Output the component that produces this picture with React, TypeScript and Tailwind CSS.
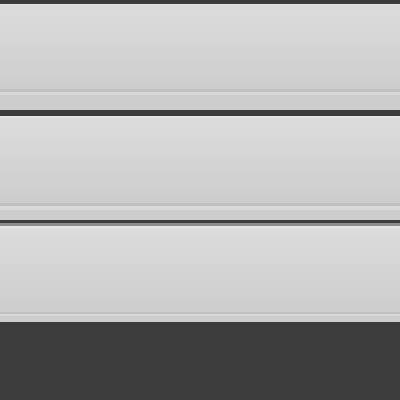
import React from 'react';

const rows = [
  { id: 'a', top: 'h-[1px]', body: 'h-[84px]', dark: 'h-[3px]', light: 'h-[3px]', bottom: 'h-[15px]', edge: false },
  { id: 'b', top: 'h-[2px]', body: 'h-[85px]', dark: 'h-[3px]', light: 'h-[4px]', bottom: 'h-[10px]', edge: false },
  { id: 'c', top: 'h-[2px]', body: 'h-[84px]', dark: 'h-[2px]', light: 'h-[2px]', bottom: 'h-[6px]', edge: true },
];

const Bar: React.FC<{ row: (typeof rows)[number] }> = ({ row }) => (
  <div className="flex flex-col w-full">
    {row.edge && <div className="h-[3px] bg-[#8c8c8c]" />}
    <div className={`${row.top} bg-[#e4e4e4]`} />
    <div className={`${row.body} bg-gradient-to-b from-[#dcdcdc] to-[#cdcdcd]`} />
    <div className={`${row.dark} bg-[#c1c1c1]`} />
    <div className={`${row.light} bg-[#d8d8d8]`} />
    <div className={`${row.bottom} bg-[#cdcdcd]`} />
  </div>
);

export default function App() {
  return (
    <div className="w-[400px] h-[400px] bg-[#3c3c3c] flex flex-col pt-[4px] gap-[6px] overflow-hidden">
      <Bar row={rows[0]} />
      <Bar row={rows[1]} />
      <div className="-mt-[3px]">
        <Bar row={rows[2]} />
      </div>
    </div>
  );
}
